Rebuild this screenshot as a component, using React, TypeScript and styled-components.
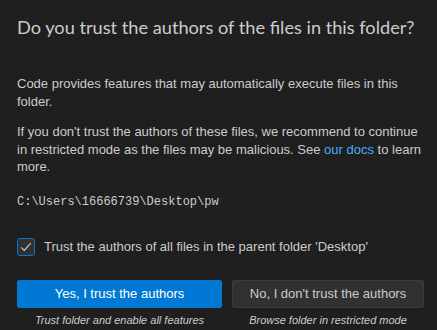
import React from 'react';
import styled, { createGlobalStyle } from 'styled-components';

const GlobalStyle = createGlobalStyle`
  html, body {
    margin: 0;
    padding: 0;
    background: #1f1f1f;
  }
  body {
    font-family: 'Liberation Sans', Arial, sans-serif;
    color: #cccccc;
  }
`;

const Dialog = styled.div`
  width: 437px;
  height: 330px;
  box-sizing: border-box;
  padding: 15px 12px 0 17px;
  background: #1f1f1f;
  display: flex;
  flex-direction: column;
`;

const Title = styled.h1`
  margin: 0;
  font-family: Lato, 'Liberation Sans', sans-serif;
  font-size: 18.2px;
  font-weight: 400;
  line-height: 25px;
  white-space: nowrap;
  color: #cccccc;
`;

const Body = styled.div`
  margin-top: 35px;
  font-size: 13px;
  line-height: 17.5px;
`;

const Paragraph = styled.p`
  margin: 0 0 13px;
`;

const Link = styled.a`
  color: #4daafc;
  text-decoration: none;
`;

const Path = styled.div`
  margin-top: 18px;
  font-family: 'Liberation Mono', Consolas, monospace;
  font-size: 12px;
  line-height: 17px;
`;

const CheckRow = styled.label`
  margin-top: 27px;
  display: flex;
  align-items: center;
  gap: 9px;
  font-size: 13px;
  line-height: 18px;
`;

const CheckBox = styled.span`
  width: 18px;
  height: 18px;
  box-sizing: border-box;
  border: 1px solid #0078d4;
  border-radius: 3px;
  background: #313131;
  display: flex;
  align-items: center;
  justify-content: center;
`;

const Actions = styled.div`
  margin-top: 24px;
  display: flex;
  gap: 10px;
`;

const Choice = styled.div<{ $width: number }>`
  width: ${(p) => p.$width}px;
  display: flex;
  flex-direction: column;
  align-items: center;
`;

const Button = styled.button<{ $primary?: boolean }>`
  width: 100%;
  height: 28px;
  box-sizing: border-box;
  border-radius: 2px;
  border: 1px solid ${(p) => (p.$primary ? '#0078d4' : '#3c3c3c')};
  background: ${(p) => (p.$primary ? '#0078d4' : '#313131')};
  color: ${(p) => (p.$primary ? '#ffffff' : '#cccccc')};
  font-family: 'Liberation Sans', Arial, sans-serif;
  font-size: 13px;
  cursor: pointer;
`;

const Caption = styled.div`
  margin-top: 5px;
  font-size: 11px;
  line-height: 14px;
  font-style: italic;
  color: #cccccc;
`;

export default function App() {
  return (
    <>
      <GlobalStyle />
      <Dialog>
        <Title>Do you trust the authors of the files in this folder?</Title>
        <Body>
          <Paragraph>
            Code provides features that may automatically execute files in this folder.
          </Paragraph>
          <Paragraph>
            If you don't trust the authors of these files, we recommend to continue in
            restricted mode as the files may be malicious. See <Link href="#">our docs</Link>{' '}
            to learn more.
          </Paragraph>
          <Path>C:\Users\16666739\Desktop\pw</Path>
        </Body>
        <CheckRow>
          <CheckBox>
            <svg width="14" height="14" viewBox="0 0 16 16" fill="none">
              <path d="M2.5 8.5 L6 12 L13.5 3.5" stroke="#cccccc" strokeWidth="1.3" />
            </svg>
          </CheckBox>
          Trust the authors of all files in the parent folder 'Desktop'
        </CheckRow>
        <Actions>
          <Choice $width={205}>
            <Button $primary>Yes, I trust the authors</Button>
            <Caption>Trust folder and enable all features</Caption>
          </Choice>
          <Choice $width={192}>
            <Button>No, I don't trust the authors</Button>
            <Caption>Browse folder in restricted mode</Caption>
          </Choice>
        </Actions>
      </Dialog>
    </>
  );
}
